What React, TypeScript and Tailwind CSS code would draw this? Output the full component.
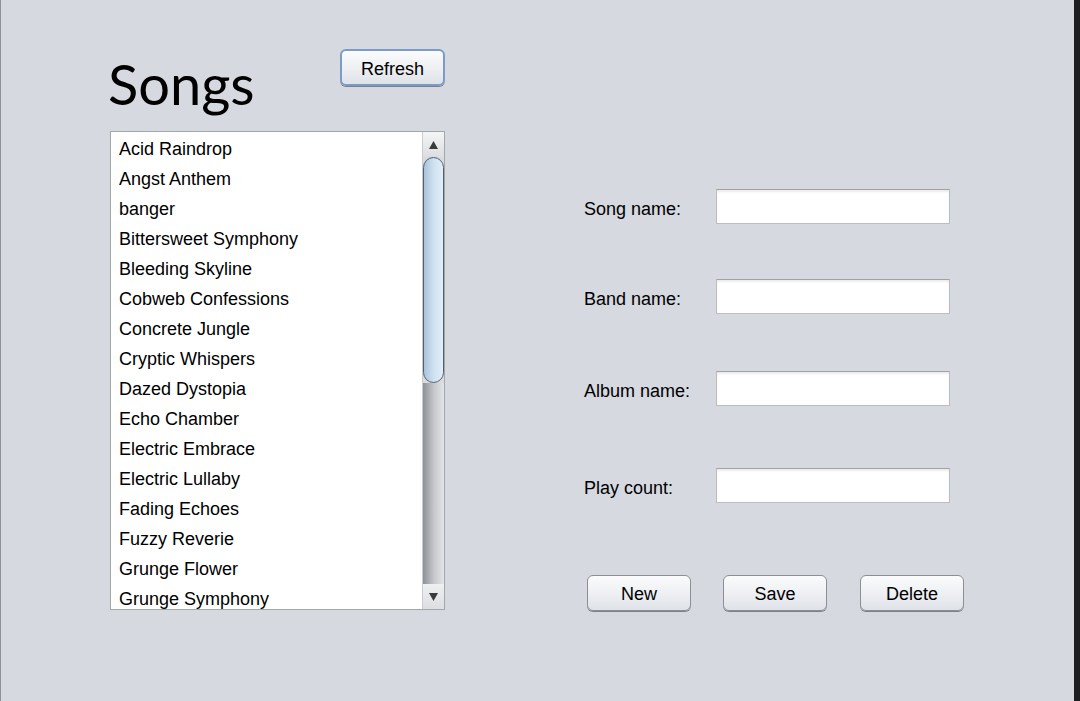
import React from 'react'

const SONGS = [
  'Acid Raindrop',
  'Angst Anthem',
  'banger',
  'Bittersweet Symphony',
  'Bleeding Skyline',
  'Cobweb Confessions',
  'Concrete Jungle',
  'Cryptic Whispers',
  'Dazed Dystopia',
  'Echo Chamber',
  'Electric Embrace',
  'Electric Lullaby',
  'Fading Echoes',
  'Fuzzy Reverie',
  'Grunge Flower',
  'Grunge Symphony',
]

const FIELDS = [
  { label: 'Song name:', mt: 'mt-0' },
  { label: 'Band name:', mt: 'mt-[55px]' },
  { label: 'Album name:', mt: 'mt-[57px]' },
  { label: 'Play count:', mt: 'mt-[62px]' },
]

function Button({ children, focused = false }: { children: React.ReactNode; focused?: boolean }) {
  return (
    <button
      className={`flex h-[36px] items-center justify-center rounded-[6px] bg-gradient-to-b from-[#fbfbfc] via-[#eef0f3] to-[#dfe2e8] pt-[3px] text-[18px] text-black shadow-[0_1px_0_#7d8086] ${
        focused ? 'h-[37px] w-[105px] border-2 border-[#7b9cc6]' : 'w-[104px] border border-[#8c8f94]'
      }`}
      style={{ fontFamily: '"Liberation Sans", Arial, sans-serif' }}
    >
      {children}
    </button>
  )
}

function ScrollBar() {
  return (
    <div className="flex h-full w-[22px] flex-col border-l border-[#c9ccd1] bg-[#d9dbdf]">
      <div className="flex h-[25px] items-center justify-center bg-gradient-to-b from-[#f4f5f6] to-[#dcdee2]">
        <svg width="11" height="10" viewBox="0 0 11 10">
          <path d="M5.5 1 L10 9 L1 9 Z" fill="#3a3a3a" />
        </svg>
      </div>
      <div className="h-[226px] rounded-b-[14px] rounded-t-[14px] border border-[#4d6070] bg-gradient-to-r from-[#a9c3da] via-[#cfe1f0] to-[#e3eef8]" />
      <div className="flex-1 bg-gradient-to-r from-[#8d9096] via-[#c4c6ca] to-[#e4e5e8]" />
      <div className="flex h-[25px] items-center justify-center bg-gradient-to-b from-[#eef0f2] to-[#dcdee2]">
        <svg width="11" height="10" viewBox="0 0 11 10">
          <path d="M1 1 L10 1 L5.5 9 Z" fill="#3a3a3a" />
        </svg>
      </div>
    </div>
  )
}

export default function App() {
  return (
    <div className="flex h-[701px] w-[1080px] overflow-hidden bg-[#1c1c1e]">
      <div className="w-[1px] bg-[#8e9297]" />
      <div className="flex w-[1073px] bg-[#d6d9e0]">
        {/* left column */}
        <div className="ml-[107px] flex w-[337px] flex-col pt-[49px]">
          <div className="flex items-start justify-between">
            <h1
              className="mt-[2px] text-[56px] font-normal leading-[66px] text-black"
              style={{ fontFamily: 'Lato, "Open Sans", sans-serif' }}
            >
              Songs
            </h1>
            <Button focused>Refresh</Button>
          </div>
          <div className="mt-[14px] ml-[2px] flex h-[479px] w-[335px] border border-[#a3a6ab] bg-white">
            <ul
              className="flex-1 overflow-hidden pt-[2px] pl-[8px] text-[18px] text-black"
              style={{ fontFamily: '"Liberation Sans", Arial, sans-serif' }}
            >
              {SONGS.map((s) => (
                <li key={s} className="flex h-[30px] items-center">
                  {s}
                </li>
              ))}
            </ul>
            <ScrollBar />
          </div>
        </div>

        {/* right column */}
        <div
          className="ml-[139px] flex flex-col pt-[189px] text-[18px] text-black"
          style={{ fontFamily: '"Liberation Sans", Arial, sans-serif' }}
        >
          {FIELDS.map((f) => (
            <div key={f.label} className={`flex items-center ${f.mt}`}>
              <span className="w-[132px] pt-[5px]">{f.label}</span>
              <div className="h-[35px] w-[234px] border border-[#bdbdbd] border-t-[#a2a2a2] bg-white shadow-[inset_0_2px_2px_rgba(0,0,0,0.08)]" />
            </div>
          ))}
          <div className="mt-[72px] ml-[3px] flex gap-[32px]">
            <Button>New</Button>
            <Button>Save</Button>
            <div className="ml-[1px]">
              <Button>Delete</Button>
            </div>
          </div>
        </div>
      </div>
      <div className="flex-1 bg-[#1f1f21]" />
    </div>
  )
}
